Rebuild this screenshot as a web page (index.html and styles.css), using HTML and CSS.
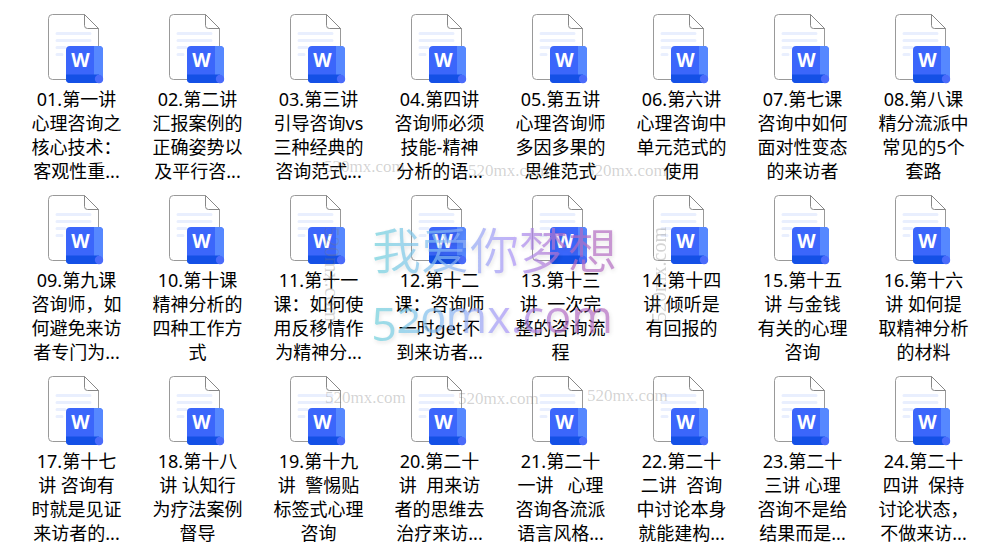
FILE: index.html
```html
<!DOCTYPE html>
<html lang="zh-CN">
<head>
    <meta charset="UTF-8">
    <meta name="viewport" content="width=device-width, initial-scale=1.0">
    <title>心理咨询课程</title>
    <link rel="stylesheet" href="styles.css">
</head>
<body>
    <svg class="sprite" aria-hidden="true">
        <symbol id="word-file" viewBox="-1 0 73 74">
            <path d="M11.500 1.500H43.500L57.500 15.500V62.500Q57.500 66.500 53.500 66.500H11.500Q7.500 66.500 7.500 62.500V5.500Q7.500 1.500 11.500 1.500Z" fill="#fff" stroke="#999" />
            <path d="M43.500 1.500V12.500Q43.500 15.500 46.500 15.500H57.500Z" fill="#fff" stroke="#888" stroke-linejoin="round" />
            <path d="M16 20.500H49M16 27.500H49M16 34.500H24M16 41.500H21" stroke="#e9effe" stroke-width="3" stroke-linecap="round" />
            <rect x="25" y="33" width="37" height="37" rx="4" fill="#3b66fb" />
            <path d="M53 33H58Q62 33 62 37V66H53Z" fill="#5688ff" />
            <path d="M25 61.500H58V70H29Q25 70 25 66Z" fill="#1450e6" />
            <circle cx="58" cy="66" r="4.200" fill="#4a6bfa" />
            <text x="39.500" y="53.500" class="letter">W</text>
        </symbol>
    </svg>

    <main class="desktop">
        <ul class="files">
            <li class="file"><svg class="icon"><use href="#word-file" /></svg><span class="name">01.第一讲<br>心理咨询之<br>核心技术：<br>客观性重...</span></li>
            <li class="file"><svg class="icon"><use href="#word-file" /></svg><span class="name">02.第二讲<br>汇报案例的<br>正确姿势以<br>及平行咨...</span></li>
            <li class="file"><svg class="icon"><use href="#word-file" /></svg><span class="name">03.第三讲<br>引导咨询vs<br>三种经典的<br>咨询范式...</span></li>
            <li class="file"><svg class="icon"><use href="#word-file" /></svg><span class="name">04.第四讲<br>咨询师必须<br>技能-精神<br>分析的语...</span></li>
            <li class="file"><svg class="icon"><use href="#word-file" /></svg><span class="name">05.第五讲<br>心理咨询师<br>多因多果的<br>思维范式</span></li>
            <li class="file"><svg class="icon"><use href="#word-file" /></svg><span class="name">06.第六讲<br>心理咨询中<br>单元范式的<br>使用</span></li>
            <li class="file"><svg class="icon"><use href="#word-file" /></svg><span class="name">07.第七课<br>咨询中如何<br>面对性变态<br>的来访者</span></li>
            <li class="file"><svg class="icon"><use href="#word-file" /></svg><span class="name">08.第八课<br>精分流派中<br>常见的5个<br>套路</span></li>

            <li class="file"><svg class="icon"><use href="#word-file" /></svg><span class="name">09.第九课<br>咨询师，如<br>何避免来访<br>者专门为...</span></li>
            <li class="file"><svg class="icon"><use href="#word-file" /></svg><span class="name">10.第十课<br>精神分析的<br>四种工作方<br>式</span></li>
            <li class="file"><svg class="icon"><use href="#word-file" /></svg><span class="name">11.第十一<br>课：如何使<br>用反移情作<br>为精神分...</span></li>
            <li class="file"><svg class="icon"><use href="#word-file" /></svg><span class="name">12.第十二<br>课：咨询师<br>一时get不<br>到来访者...</span></li>
            <li class="file"><svg class="icon"><use href="#word-file" /></svg><span class="name">13.第十三<br>讲&nbsp; 一次完<br>整的咨询流<br>程</span></li>
            <li class="file"><svg class="icon"><use href="#word-file" /></svg><span class="name">14.第十四<br>讲 倾听是<br>有回报的</span></li>
            <li class="file"><svg class="icon"><use href="#word-file" /></svg><span class="name">15.第十五<br>讲 与金钱<br>有关的心理<br>咨询</span></li>
            <li class="file"><svg class="icon"><use href="#word-file" /></svg><span class="name">16.第十六<br>讲 如何提<br>取精神分析<br>的材料</span></li>

            <li class="file"><svg class="icon"><use href="#word-file" /></svg><span class="name">17.第十七<br>讲 咨询有<br>时就是见证<br>来访者的...</span></li>
            <li class="file"><svg class="icon"><use href="#word-file" /></svg><span class="name">18.第十八<br>讲 认知行<br>为疗法案例<br>督导</span></li>
            <li class="file"><svg class="icon"><use href="#word-file" /></svg><span class="name">19.第十九<br>讲&nbsp; 警惕贴<br>标签式心理<br>咨询</span></li>
            <li class="file"><svg class="icon"><use href="#word-file" /></svg><span class="name">20.第二十<br>讲&nbsp; 用来访<br>者的思维去<br>治疗来访...</span></li>
            <li class="file"><svg class="icon"><use href="#word-file" /></svg><span class="name">21.第二十<br>一讲&nbsp;&nbsp; 心理<br>咨询各流派<br>语言风格...</span></li>
            <li class="file"><svg class="icon"><use href="#word-file" /></svg><span class="name">22.第二十<br>二讲&nbsp; 咨询<br>中讨论本身<br>就能建构...</span></li>
            <li class="file"><svg class="icon"><use href="#word-file" /></svg><span class="name">23.第二十<br>三讲 心理<br>咨询不是给<br>结果而是...</span></li>
            <li class="file"><svg class="icon"><use href="#word-file" /></svg><span class="name">24.第二十<br>四讲&nbsp; 保持<br>讨论状态，<br>不做来访...</span></li>
        </ul>

        <div class="watermark">
            <span class="brand brand-cn">我爱你梦想</span>
            <span class="brand brand-url">520mx.com</span>
            <span class="mark mark-1">520mx.com</span>
            <span class="mark mark-2">520mx.com</span>
            <span class="mark mark-3">520mx.com</span>
            <span class="mark mark-4">520mx.com</span>
            <span class="mark mark-5">520mx.com</span>
            <span class="mark mark-6">520mx.com</span>
            <span class="mark mark-left">520mx.com</span>
            <span class="mark mark-right">520mx.com</span>
        </div>
    </main>
</body>
</html>
```

FILE: styles.css
```css
* {
    margin: 0;
    padding: 0;
    box-sizing: border-box;
}

body {
    font-family: "Noto Sans", "Noto Sans CJK SC", sans-serif;
    background-color: #fff;
    color: #000;
}

.sprite {
    display: none;
}

.desktop {
    position: relative;
    padding: 13px 9px 0 16px;
}

.files {
    display: grid;
    grid-template-columns: repeat(8, 1fr);
    row-gap: 11px;
    list-style: none;
}

.file {
    display: flex;
    flex-direction: column;
    align-items: center;
}

.icon {
    width: 73px;
    height: 74px;
}

.letter {
    font-family: "Open Sans", sans-serif;
    font-size: 19px;
    font-weight: 700;
    text-anchor: middle;
    fill: #fff;
}

.name {
    font-size: 18px;
    font-weight: 380;
    line-height: 24px;
    text-align: center;
    white-space: nowrap;
}

/* watermark lies over the icons */
.watermark {
    position: absolute;
    inset: 0;
    pointer-events: none;
}

.brand,
.mark {
    position: absolute;
    white-space: nowrap;
}

.brand {
    left: 372px;
    background: linear-gradient(90deg, #6fd0da, #86b8f2 30%, #a890f4 58%, #b068c0 80%, #b26cc0);
    background-clip: text;
    -webkit-background-clip: text;
    color: transparent;
    filter: drop-shadow(1px 2px 2px rgba(0, 0, 0, 0.15));
    opacity: 0.7;
}

.brand-cn {
    top: 220px;
    font-family: "Noto Sans CJK SC", sans-serif;
    font-size: 49px;
    font-weight: 350;
    line-height: 56px;
}

.brand-url {
    top: 286px;
    font-family: "Open Sans", sans-serif;
    font-size: 45px;
    line-height: 60px;
    font-variant-numeric: oldstyle-nums;
}

.mark {
    font-family: "Liberation Serif", serif;
    font-size: 17px;
    line-height: 20px;
    color: rgba(120, 120, 120, 0.32);
}

.mark-1 { left: 324px; top: 157px; }
.mark-2 { left: 468px; top: 161px; }
.mark-3 { left: 586px; top: 161px; }
.mark-4 { left: 325px; top: 388px; }
.mark-5 { left: 458px; top: 389px; }
.mark-6 { left: 587px; top: 386px; }

.mark-left,
.mark-right {
    top: 227px;
    font-size: 20px;
    writing-mode: vertical-rl;
}

.mark-left {
    left: 322px;
}

.mark-right {
    left: 649px;
    transform: rotate(180deg);
}
```
